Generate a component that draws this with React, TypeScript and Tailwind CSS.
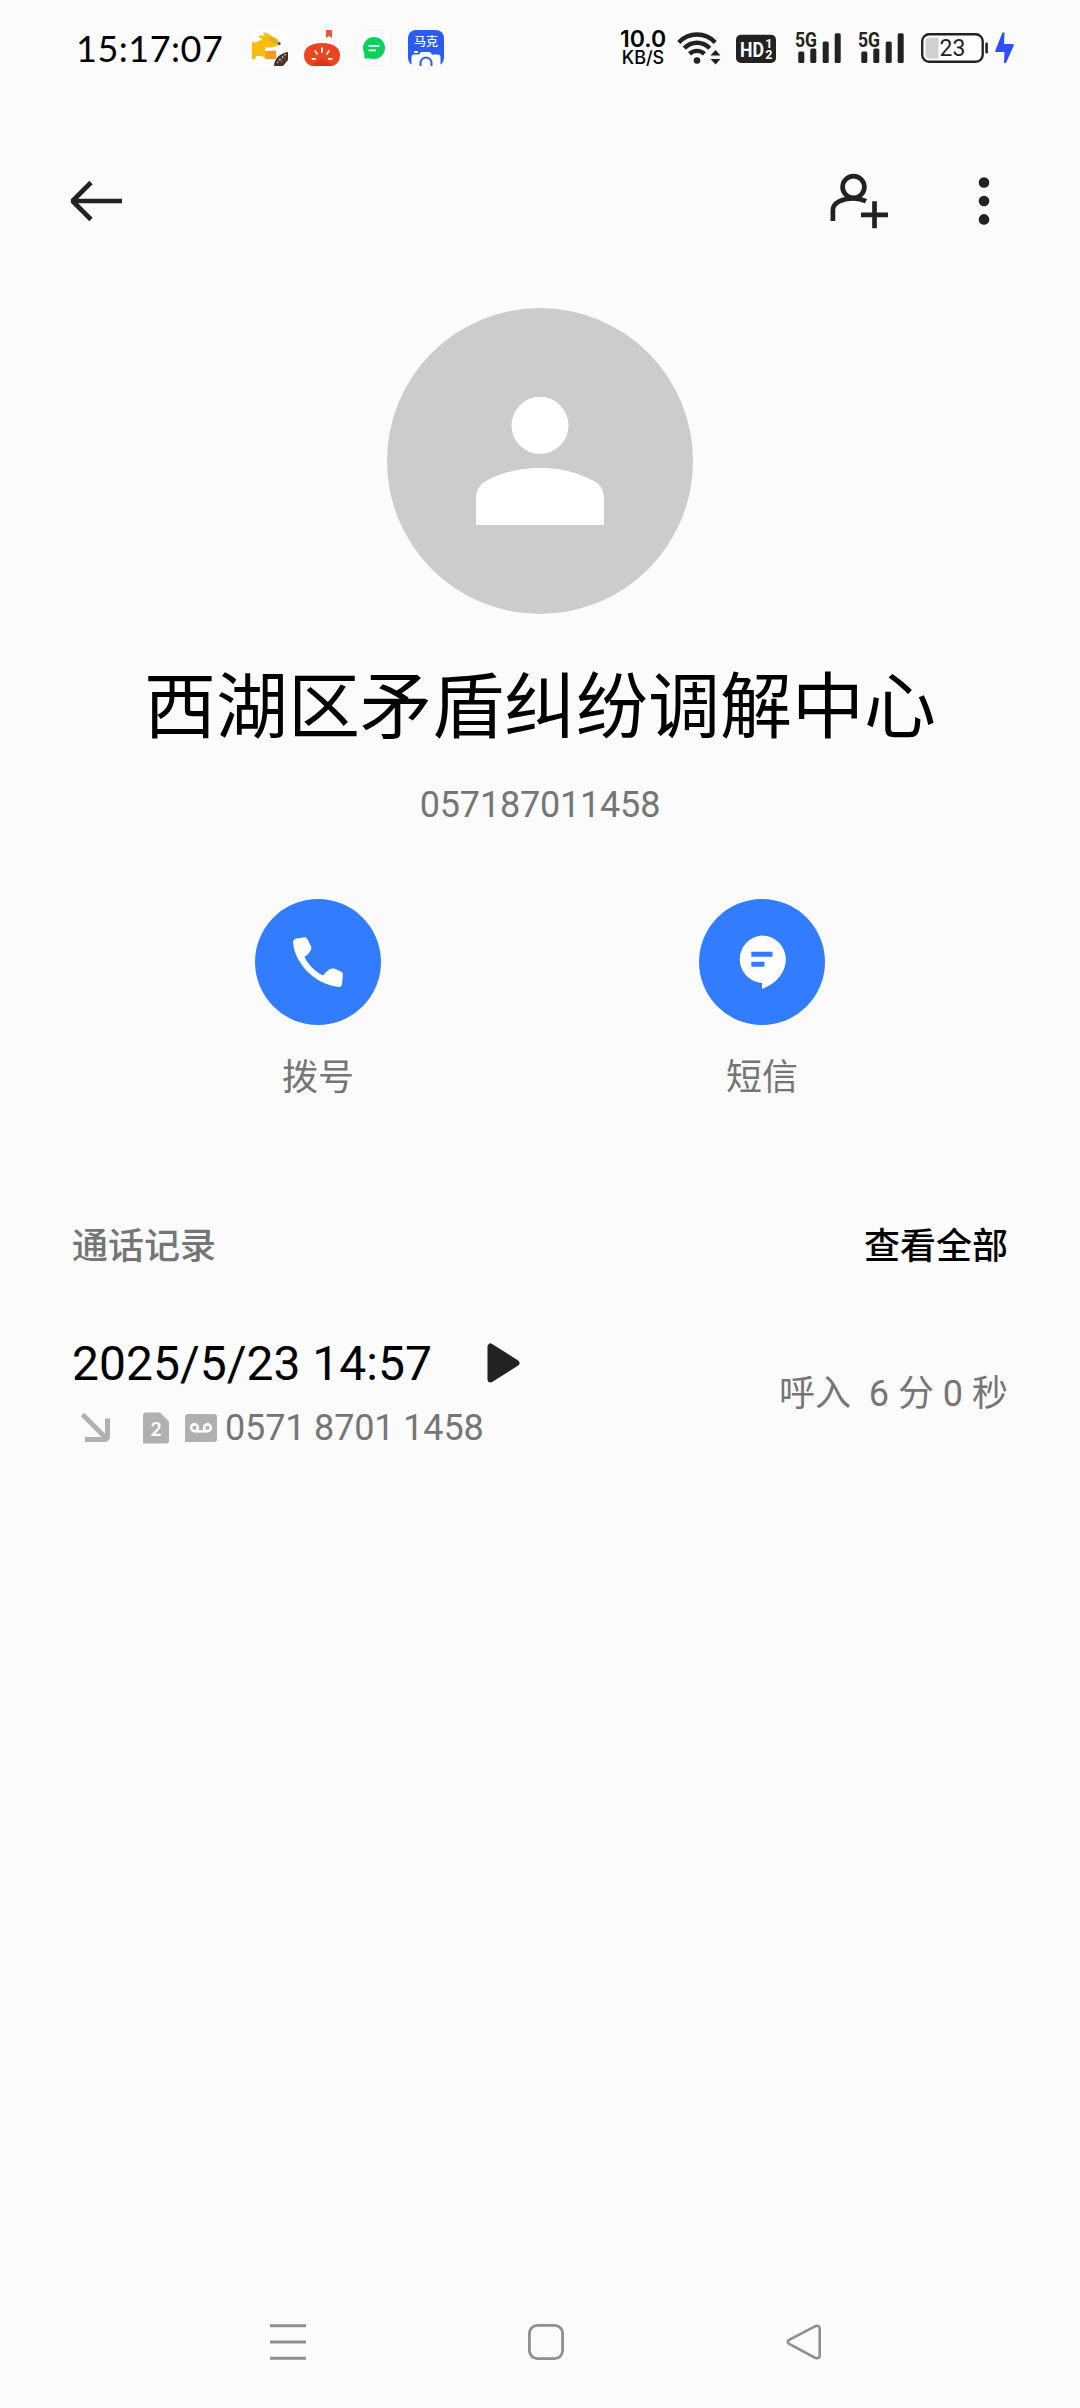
function StatusBar() {
  return (
    <div className="flex h-24 shrink-0 items-center pl-[76px] pr-[64px]">
      <span className="w-[150px] whitespace-nowrap font-[Lato,sans-serif] text-[36px] font-normal leading-none tracking-[0.5px] text-black">
        15:17:07
      </span>

      {/* notificações */}
      <div className="ml-[26px] flex gap-4">
        <svg width="36" height="36" viewBox="0 0 36 36">
          <rect width="36" height="36" rx="8" fill="#fff" />
          <path d="M0 12L3 12.500L10 9.500L7 7L8 5L13 6L11 3L14 2.500L20 6L26 9.500L28 15L24 16L20 17.500H13V20L14 26V28H16L15 30L10 26H4L3 29.500L0 29Z" fill="#f9bd10" />
          <path d="M13 21L24 20.500V29H14Z" fill="#f79a1e" />
          <path d="M16 7.500L22 8L28 13L27 15L19 12Z" fill="#dcae2b" />
          <circle cx="27.300" cy="13.500" r="1.300" fill="#3a2a1c" />
          <path d="M22 36C22 29 28 23 36 22V30L31 36Z" fill="#4a3128" />
          <path d="M25 33L34 24M27 29L30 32M30 26.500L33 29" stroke="#c9b9a8" strokeWidth="1.200" strokeDasharray="2 1.500" />
        </svg>
        <svg width="36" height="36" viewBox="0 0 36 36">
          <path d="M22 0H28V8L25 6L22 8Z" fill="#e9573c" />
          <path d="M18 13C30 13 36 18 36 25C36 33 31 36 25 36H11C5 36 0 33 0 25C0 18 6 13 18 13Z" fill="#ea4520" />
          <path d="M18 29L6 36H30Z" fill="#c9230c" opacity=".5" />
          <path d="M17 17.500H19L18.700 23H17.300ZM10 21L11.500 20L14 24L13 25ZM26 21L24.500 20L22 24L23 25ZM7.500 28L12 28V29.500L8 30ZM28.500 28L24 28V29.500L28 30Z" fill="#fff" />
        </svg>
        <svg width="36" height="36" viewBox="0 0 36 36">
          <rect x=".5" y=".5" width="35" height="35" rx="8" fill="#fff" stroke="#f3f3f3" />
          <circle cx="18" cy="18" r="11" fill="#0bd15c" />
          <path d="M8 20L8.500 28.500L17 28.500Z" fill="#0bd15c" />
          <path d="M12.500 15.800H23.500M12.500 20.300H20" stroke="#fff" strokeWidth="1.800" />
        </svg>
        <svg width="36" height="36" viewBox="0 0 36 36">
          <rect width="36" height="36" rx="8" fill="#2b5bf0" />
          <path d="M3.500 36V27C3.500 25 5 24.500 7 24.500H11L13 22H22L24 24.500H29C31 24.500 32.500 25 32.500 27V36Z" fill="#fff" />
          <path d="M6 22H10" stroke="#fff" strokeWidth="1.800" />
          <path d="M12.500 36V33A5.500 5.500 0 0 1 23.500 33V36" fill="#fff" stroke="#2b5bf0" strokeWidth="2" />
          <text x="18" y="16" textAnchor="middle" fontSize="12" fontWeight="500" fill="#fff" fontFamily="Noto Sans CJK SC, sans-serif">
            马克
          </text>
        </svg>
      </div>

      <div className="ml-auto flex items-center">
        <div className="flex w-[50px] flex-col items-center whitespace-nowrap font-[Inter,sans-serif] text-black">
          <span className="text-[23px] font-semibold leading-[19px]">10.0</span>
          <span className="text-[18px] font-medium leading-[17px]">KB/S</span>
        </div>

        <svg className="ml-[9px]" width="46" height="36" viewBox="0 0 46 36" fill="none">
          <g stroke="#222" strokeWidth="4.400">
            <path d="M1.800 12.400A25 25 0 0 1 38.200 12.400" />
            <path d="M7.300 18.200A17.500 17.500 0 0 1 32.700 18.200" />
            <path d="M12.600 23.900A10.500 10.500 0 0 1 27.400 23.900" />
          </g>
          <circle cx="20" cy="30.500" r="3.300" fill="#222" />
          <path d="M38.500 20L43.500 25.500H33.500ZM38.500 34.500L43.500 29H33.500Z" fill="#222" />
        </svg>

        <svg className="ml-[13px]" width="40" height="36" viewBox="0 0 40 36">
          <rect y="4.800" width="40" height="28.200" rx="5" fill="#222" />
          <text x="4" y="26.700" fontSize="21" fontWeight="700" fill="#fff" fontFamily="Roboto, sans-serif" textLength="24" lengthAdjust="spacingAndGlyphs">
            HD
          </text>
          <text x="29.300" y="17.800" fontSize="12.500" fontWeight="700" fill="#fff" fontFamily="Roboto, sans-serif">
            1
          </text>
          <text x="29.300" y="29.300" fontSize="12.500" fontWeight="700" fill="#fff" fontFamily="Roboto, sans-serif">
            2
          </text>
        </svg>

        <Signal className="ml-[18px]" />
        <Signal className="ml-[15px]" />

        <svg className="ml-[15px]" width="96" height="36" viewBox="0 0 96 36">
          <rect x="2.200" y="4.200" width="60.500" height="27.600" rx="7" fill="#fff" stroke="#222" strokeWidth="2.400" />
          <path d="M9.500 7.500H18.500V28.500H9.500Q5.500 28.500 5.500 24.500V11.500Q5.500 7.500 9.500 7.500Z" fill="#d0d0d0" />
          <rect x="65.300" y="12.500" width="2.600" height="11" rx="1.300" fill="#222" />
          <text x="32.500" y="26.200" textAnchor="middle" fontSize="23" fill="#222" fontFamily="Roboto, sans-serif">
            23
          </text>
          <path d="M82.500 2.500H84.500L84 14H92.500Q94.500 14 93.500 16L86 33H84L84.500 22H76.500Q74.500 22 75.500 20Z" fill="#2b4eff" />
        </svg>
      </div>
    </div>
  );
}

function Signal({ className }: { className: string }) {
  return (
    <svg className={className} width="48" height="36" viewBox="0 0 48 36" fill="#222">
      <text x="1" y="16.500" fontSize="19.500" fontWeight="700" fontFamily="Roboto, sans-serif" textLength="22" lengthAdjust="spacingAndGlyphs">
        5G
      </text>
      <rect x="4.300" y="21.500" width="6" height="11.500" rx="1.500" />
      <rect x="16.300" y="18.500" width="6" height="14.500" rx="1.500" />
      <rect x="28.700" y="11.500" width="6" height="21.500" rx="1.500" />
      <rect x="40.700" y="3.300" width="6" height="29.700" rx="1.500" />
    </svg>
  );
}

function Header() {
  return (
    <div className="flex h-[210px] shrink-0 items-center justify-between pl-[68px] pr-[84px]">
      <svg width="56" height="56" viewBox="0 0 56 56" fill="none" stroke="#222" strokeWidth="4.600">
        <path d="M23 9.500L4.500 28L23 46.500M5 28H54" strokeLinejoin="bevel" />
      </svg>
      <div className="flex items-center gap-[84px]">
        <svg width="60" height="60" viewBox="0 0 60 60" fill="none" stroke="#222" strokeWidth="4.700">
          <circle cx="25.500" cy="16" r="10.900" />
          <path d="M4.900 50V39C4.900 32 14 27.300 25.500 27.300C30 27.300 34 28.300 38 30.200" />
          <path d="M46.500 30.300V57.300M33 43.800H60" />
        </svg>
        <svg width="24" height="60" viewBox="0 0 24 60" fill="#222">
          <circle cx="12" cy="11.500" r="5.300" />
          <circle cx="12" cy="30" r="5.300" />
          <circle cx="12" cy="48.400" r="5.300" />
        </svg>
      </div>
    </div>
  );
}

function Profile() {
  return (
    <div className="flex flex-col items-center pt-[2px]">
      <svg width="306" height="306" viewBox="0 0 306 306">
        <circle cx="153" cy="153" r="153" fill="#ccc" />
        <circle cx="153" cy="117.300" r="28.500" fill="#fff" />
        <path d="M89 217V190C89 182.500 93 176 99 173C115 164.500 132 160 153 160C174 160 191 164.500 207 173C213 176 217 182.500 217 190V217Z" fill="#fff" />
      </svg>
      <h1 className="mt-[40px] text-[72px] font-normal leading-[108px] text-black">西湖区矛盾纠纷调解中心</h1>
      <p className="mt-[19px] text-[36px] leading-[48px] tracking-[-0.2px] text-[#757575]">057187011458</p>
    </div>
  );
}

function Actions() {
  return (
    <div className="mt-[70px] flex justify-between px-[255px] text-[36px] leading-[54px] text-[#757575]">
      <div className="flex flex-col items-center gap-[26px]">
        <div className="flex size-[126px] items-center justify-center rounded-full bg-[#327cff]">
          <svg width="50" height="50" viewBox="0 0 50 50" fill="#fff">
            <path d="M3.500 1.500L11.500 .3Q13.500 .1 14.300 2L18 9.300Q18.800 11 18 12.800Q16 17 11.500 20C15.500 28 22 34.500 30 38.500Q33 34.500 37 32Q39 31 41 31.600L48 34.600Q50 35.500 49.900 37.500L49 47.500Q48.500 50 46 50C22 47.500 2 27 0 5.500Q0 2.300 3.500 1.500Z" />
          </svg>
        </div>
        <span>拨号</span>
      </div>
      <div className="flex flex-col items-center gap-[26px]">
        <div className="flex size-[126px] items-center justify-center rounded-full bg-[#327cff]">
          <svg width="48" height="54" viewBox="0 0 48 54">
            <path d="M24 .5A23.800 23.800 0 0 1 47.800 24.300C47.800 37 39 48.500 24 54V48A23.800 23.800 0 0 1 24 .5Z" fill="#fff" />
            <path d="M13.300 19.300H34.500M13.300 29.300H26.500" stroke="#327cff" strokeWidth="5" />
          </svg>
        </div>
        <span>短信</span>
      </div>
    </div>
  );
}

function CallLog() {
  return (
    <div className="mt-[115px] px-[72px]">
      <div className="flex items-center justify-between text-[36px] font-medium leading-[54px]">
        <span className="text-[#757575]">通话记录</span>
        <span className="text-black">查看全部</span>
      </div>

      <div className="mt-[56px] flex items-center justify-between">
        <div>
          <div className="flex h-[68px] items-center">
            <span className="text-[48px] leading-[68px] text-black">2025/5/23 14:57</span>
            <svg className="mb-[2px] ml-[55px]" width="34" height="42" viewBox="0 0 34 42">
              <path d="M3.500 4.500V37.500L29.500 21Z" fill="#222" stroke="#222" strokeWidth="6" strokeLinejoin="round" />
            </svg>
          </div>
          <div className="flex h-[60px] items-center">
            <svg className="ml-[9px]" width="32" height="32" viewBox="0 0 32 32" fill="none" stroke="#b0b0b0" strokeWidth="5">
              <path d="M1.500 2.500L25 26" />
              <path d="M26.500 6.500V24Q26.500 27.500 23 27.500H4" />
            </svg>
            <svg className="ml-[30px]" width="26" height="32" viewBox="0 0 26 32">
              <path d="M3 .5H17L26 9.500V28.500Q26 31.500 23 31.500H0V3.500Q0 .5 3 .5Z" fill="#b0b0b0" />
              <text x="13" y="23.500" textAnchor="middle" fontSize="19" fontWeight="700" fill="#fff" fontFamily="Lato, sans-serif">
                2
              </text>
            </svg>
            <svg className="ml-[16px]" width="32" height="28" viewBox="0 0 32 28">
              <path d="M3 0H29Q32 0 32 3V25Q32 28 29 28H0V3Q0 0 3 0Z" fill="#b0b0b0" />
              <g fill="none" stroke="#fff" strokeWidth="2.600">
                <circle cx="9.500" cy="13.800" r="3.400" />
                <circle cx="22.500" cy="13.800" r="3.400" />
                <path d="M9.500 17.300H22.500" />
              </g>
            </svg>
            <span className="ml-[8px] text-[36px] leading-none tracking-[-0.150px] text-[#757575]">0571 8701 1458</span>
          </div>
        </div>
        <span className="whitespace-pre text-[36px] leading-[54px] text-[#757575]">呼入  6 分 0 秒</span>
      </div>
    </div>
  );
}

function NavBar() {
  return (
    <div className="mt-auto flex h-[132px] items-center justify-between pl-[270px] pr-[258px]">
      <svg width="36" height="36" viewBox="0 0 36 36" stroke="#8f8f8f" strokeWidth="3">
        <path d="M0 1.700H36M0 18H36M0 34.300H36" />
      </svg>
      <svg width="36" height="36" viewBox="0 0 36 36" fill="none" stroke="#8f8f8f" strokeWidth="2.800">
        <rect x="1.400" y="1.400" width="33.200" height="33.200" rx="8" />
      </svg>
      <svg width="36" height="36" viewBox="0 0 36 36" fill="none" stroke="#8f8f8f" strokeWidth="2.600">
        <path d="M29 2.300L3.200 15.800Q.2 17.800 3.200 20L29 33.700Q33.700 35.500 33.700 31V5Q33.700 .5 29 2.300Z" />
      </svg>
    </div>
  );
}

export default function App() {
  return (
    <div
      lang="zh-CN"
      className='flex h-[2408px] w-[1080px] flex-col overflow-hidden bg-[#fbfbfb] font-[Roboto,"Noto_Sans_CJK_SC",sans-serif]'
    >
      <StatusBar />
      <Header />
      <Profile />
      <Actions />
      <CallLog />
      <NavBar />
    </div>
  );
}
